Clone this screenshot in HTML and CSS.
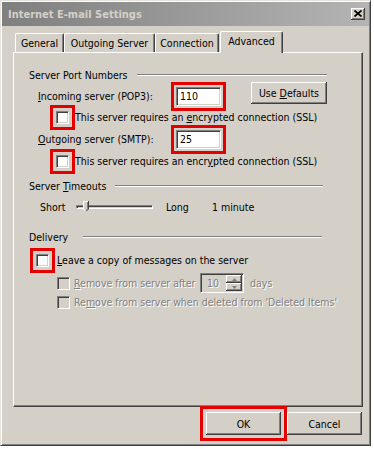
FILE: index.html
```html
<!DOCTYPE html>
<html>
<head>
<meta charset="utf-8">
<link rel="stylesheet" href="styles.css">
</head>
<body>
<div class="window">
  <div class="titlebar">
    <span class="title">Internet E-mail Settings</span>
    <span class="close"><svg width="8" height="7" viewBox="0 0 8 7"><path d="M0.5 0.5 L7.5 6.5 M7.5 0.5 L0.5 6.5" stroke="#000" stroke-width="1.7" fill="none"/></svg></span>
  </div>
  <div class="tabs">
    <div class="tab t-general">General</div>
    <div class="tab t-outgoing">Outgoing Server</div>
    <div class="tab t-connection">Connection</div>
    <div class="tab active t-advanced">Advanced</div>
  </div>
  <div class="panel">
    <div class="group-head g-ports"><span>Server Port Numbers</span><i class="etch"></i></div>
    <div class="row r-incoming">
      <span class="field-label"><u>I</u>ncoming server (POP3):</span>
      <span class="textbox marked">110</span>
      <span class="btn defaults">Use&nbsp;<u>D</u>efaults</span>
    </div>
    <div class="row r-check">
      <span class="checkbox marked-cb"></span>
      <span class="check-label">This server requires an <u>e</u>ncrypted connection (SSL)</span>
    </div>
    <div class="row r-outgoing">
      <span class="field-label"><u>O</u>utgoing server (SMTP):</span>
      <span class="textbox marked">25</span>
    </div>
    <div class="row r-check">
      <span class="checkbox marked-cb"></span>
      <span class="check-label">This server requires an encr<u>y</u>pted connection (SSL)</span>
    </div>
    <div class="group-head g-timeouts"><span>Server <u>T</u>imeouts</span><i class="etch"></i></div>
    <div class="row r-slider">
      <span class="sl-short">Short</span>
      <span class="slider">
        <span class="track"></span>
        <svg class="thumb" width="6" height="11" viewBox="0 0 6 11"><path d="M0 0 H6 V8 L3 11 L0 8 Z" fill="#d4d0c8"/><path d="M0.5 8 V0.5 H5" stroke="#fff" fill="none"/><path d="M5.5 0 V8 L3 10.5" stroke="#404040" fill="none"/><path d="M4.5 1 V7.7 L3 9.3" stroke="#808080" fill="none"/><path d="M0.5 8 L3 10.5" stroke="#fff" fill="none"/></svg>
      </span>
      <span class="sl-long">Long</span>
      <span>1 minute</span>
    </div>
    <div class="group-head g-delivery"><span>Delivery</span><i class="etch"></i></div>
    <div class="row r-leave">
      <span class="checkbox marked-cb"></span>
      <span class="check-label"><u>L</u>eave a copy of messages on the server</span>
    </div>
    <div class="row r-remove">
      <span class="checkbox disabled"></span>
      <span class="check-label dis rm-label"><u>R</u>emove from server after</span>
      <span class="spin">
        <span class="spin-val dis">10</span>
        <span class="spin-btns">
          <span class="sb"><svg width="5" height="3" viewBox="0 0 5 3"><path d="M2.5 0 L5 3 L0 3 Z" fill="#808080"/></svg></span>
          <span class="sb"><svg width="5" height="3" viewBox="0 0 5 3"><path d="M0 0 L5 0 L2.5 3 Z" fill="#808080"/></svg></span>
        </span>
      </span>
      <span class="dis days">days</span>
    </div>
    <div class="row r-remove2">
      <span class="checkbox disabled"></span>
      <span class="check-label dis">Re<u>m</u>ove from server when deleted from 'Deleted Items'</span>
    </div>
  </div>
  <div class="buttons">
    <span class="btn dlg ok marked-ok">OK</span>
    <span class="btn dlg">Cancel</span>
  </div>
</div>
</body>
</html>
```
FILE: styles.css
```css
* { box-sizing: border-box; }
html, body { margin: 0; padding: 0; background: #fff; }
body {
  font-family: "DejaVu Sans Condensed", "DejaVu Sans", sans-serif;
  font-stretch: condensed;
  font-size: 10.5px;
  color: #000;
}
u { text-decoration: underline; text-underline-offset: 1px; }

.window {
  width: 371px;
  height: 446px;
  background: #d4d0c8;
  border: 1px solid;
  border-color: #e4e2dc #404040 #404040 #e4e2dc;
  box-shadow: inset 1px 1px #fff, inset -1px -1px #808080;
  padding: 1px;
  display: flex;
  flex-direction: column;
}

.titlebar {
  height: 24px;
  display: flex;
  align-items: center;
  justify-content: space-between;
  padding: 0 4px 0 6px;
  background: linear-gradient(90deg, #7f7f7f, #b4b4b4);
}
.title {
  font-weight: bold;
  font-size: 11px;
  color: #d4d0c8;
}
.close {
  width: 14px;
  height: 12px;
  background: #d4d0c8;
  box-shadow: inset -1px -1px #404040, inset 1px 1px #fff, inset -2px -2px #808080;
  display: flex;
  align-items: center;
  justify-content: center;
  padding-bottom: 1px;
}

.tabs {
  display: flex;
  align-items: flex-end;
  height: 21px;
  margin: 5px 0 0 11px;
}
.tab {
  height: 19px;
  border-top: 1px solid #fff;
  border-left: 1px solid #fff;
  border-right: 1px solid #404040;
  box-shadow: inset -1px 0 #808080;
  border-radius: 2px 2px 0 0;
  display: flex;
  align-items: center;
  justify-content: center;
  padding-bottom: 1px;
}
.tab.active {
  height: 22px;
  margin-bottom: -1px;
  position: relative;
  z-index: 1;
  background: #d4d0c8;
  padding-bottom: 3px;
}
.t-general { margin-left: 2px; width: 49px; }
.t-outgoing { width: 91px; }
.t-connection { width: 64px; }
.t-advanced { margin-left: 1px; width: 63px; }

.panel {
  margin-left: 11px;
  width: 350px;
  height: 355px;
  border: 1px solid;
  border-color: #fff #404040 #404040 #fff;
  box-shadow: inset -1px -1px #808080;
  display: flex;
  flex-direction: column;
}

.group-head {
  height: 14px;
  display: flex;
  align-items: center;
  padding-left: 15px;
}
.etch {
  flex: 1;
  height: 2px;
  border-top: 1px solid #808080;
  border-bottom: 1px solid #fff;
}
.g-ports { margin-top: 15px; padding-right: 35px; }
.g-ports .etch { margin-left: 9px; }
.g-timeouts { margin-top: 11px; padding-right: 39px; }
.g-timeouts .etch { margin-left: 9px; }
.g-delivery { margin-top: 13px; padding-right: 40px; }
.g-delivery .etch { margin-left: 15px; }

.row { display: flex; align-items: center; }
.r-incoming { height: 28px; }
.r-outgoing { height: 30px; }
.r-check { height: 14px; }
.field-label { margin-left: 24px; width: 138px; }

.textbox {
  width: 45px;
  height: 19px;
  background: #fff;
  border: 1px solid;
  border-color: #808080 #fff #fff #808080;
  box-shadow: inset 1px 1px #404040, inset -1px -1px #d4d0c8;
  padding-left: 3px;
  display: flex;
  align-items: center;
}
.marked { outline: 3px solid #e30000; outline-offset: 2px; }
.marked-cb { outline: 3px solid #e30000; outline-offset: 3px; }
.marked-ok { outline: 3px solid #e30000; outline-offset: 3px; }

.btn {
  display: flex;
  align-items: center;
  justify-content: center;
  background: #d4d0c8;
  box-shadow: inset -1px -1px #404040, inset 1px 1px #fff, inset -2px -2px #808080;
}
.defaults {
  width: 76px;
  height: 22px;
  margin-left: 30px;
  margin-bottom: 6px;
}

.checkbox {
  flex: none;
  width: 13px;
  height: 13px;
  background: #fff;
  border: 1px solid;
  border-color: #808080 #fff #fff #808080;
  box-shadow: inset 1px 1px #404040, inset -1px -1px #d4d0c8;
}
.checkbox.disabled { background: #d4d0c8; }
.r-check .checkbox { margin-left: 42px; }
.r-check .check-label { margin-left: 6px; }

.r-slider { height: 20px; margin-top: 4px; }
.sl-short { margin-left: 26px; width: 36px; }
.slider {
  position: relative;
  width: 77px;
  height: 20px;
  display: flex;
  align-items: center;
}
.track {
  flex: 1;
  height: 4px;
  border-top: 1px solid #808080;
  border-left: 1px solid #808080;
  border-bottom: 1px solid #fff;
  border-right: 1px solid #fff;
  box-shadow: inset 1px 1px #404040;
  background: #d4d0c8;
}
.thumb { position: absolute; left: 7px; top: 4px; }
.sl-long { margin-left: 13px; width: 46px; }

.r-leave { height: 16px; margin-top: 8px; }
.r-leave .checkbox { margin-left: 22px; }
.r-leave .check-label { margin-left: 8px; }

.dis { color: #808080; text-shadow: 1px 1px 0 #fff; }

.r-remove { height: 20px; margin-top: 5px; }
.r-remove .checkbox, .r-remove2 .checkbox { margin-left: 43px; }
.r-remove .check-label, .r-remove2 .check-label { margin-left: 4px; }
.rm-label { width: 126px; white-space: nowrap; }
.r-remove2 { height: 16px; margin-top: 1px; }

.spin {
  width: 44px;
  height: 20px;
  background: #d4d0c8;
  border: 1px solid;
  border-color: #808080 #fff #fff #808080;
  box-shadow: inset 1px 1px #404040, inset -1px -1px #d4d0c8;
  display: flex;
  padding: 1px;
}
.spin-val { flex: 1; padding-left: 5px; display: flex; align-items: center; }
.spin-btns { width: 16px; display: flex; flex-direction: column; }
.sb {
  flex: 1;
  display: flex;
  align-items: center;
  justify-content: center;
  background: #d4d0c8;
  box-shadow: inset -1px -1px #404040, inset 1px 1px #fff, inset -2px -2px #808080;
}
.days { margin-left: 6px; }

.buttons {
  display: flex;
  justify-content: flex-end;
  gap: 6px;
  margin: 5px 0 0 11px;
  width: 350px;
  padding-right: 1px;
}
.dlg { width: 75px; height: 23px; }
```
